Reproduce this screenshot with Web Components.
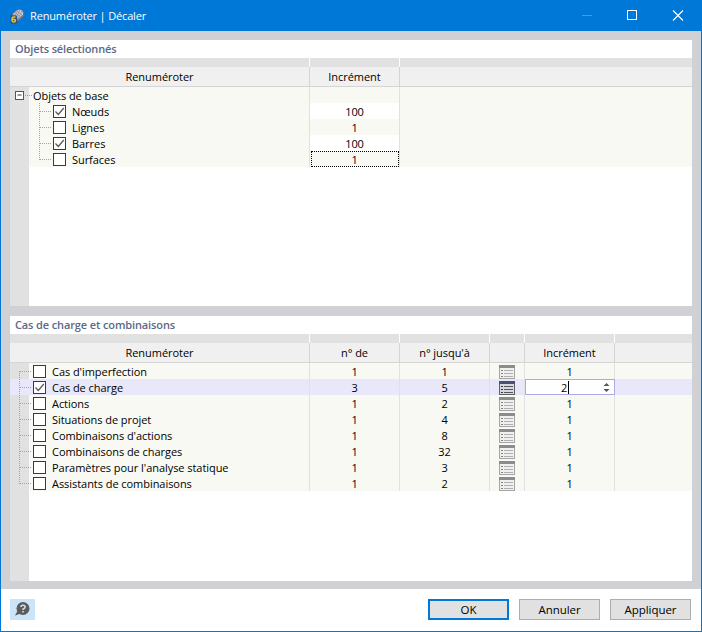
<!DOCTYPE html>
<html lang="fr"><head><meta charset="utf-8"><title>Renuméroter | Décaler</title>
<style>
html,body{margin:0;padding:0;background:#fff}
body{font:11px "Open Sans","Noto Sans",sans-serif;color:#000;letter-spacing:-.05px}
</style></head><body>
<rn-window>
  <rn-titlebar slot="title" text="Renuméroter | Décaler"></rn-titlebar>
  <rn-panel heading="Objets sélectionnés" cols="299px 89px 1fr">
    <rn-header cols="299px 89px 1fr"><span>Renuméroter</span><span>Incrément</span><span></span></rn-header>
    <rn-row cols="299px 89px 1fr"><rn-tree kind="root">Objets de base</rn-tree><rn-cell></rn-cell><rn-cell></rn-cell></rn-row>
    <rn-row cols="299px 89px 1fr"><rn-tree kind="child" checked>Nœuds</rn-tree><rn-cell white>100</rn-cell><rn-cell></rn-cell></rn-row>
    <rn-row cols="299px 89px 1fr"><rn-tree kind="child">Lignes</rn-tree><rn-cell>1</rn-cell><rn-cell></rn-cell></rn-row>
    <rn-row cols="299px 89px 1fr"><rn-tree kind="child" checked>Barres</rn-tree><rn-cell white>100</rn-cell><rn-cell></rn-cell></rn-row>
    <rn-row cols="299px 89px 1fr"><rn-tree kind="child" last>Surfaces</rn-tree><rn-cell focus>1</rn-cell><rn-cell></rn-cell></rn-row>
  </rn-panel>
  <rn-panel heading="Cas de charge et combinaisons" cols="299px 89px 89px 34px 89px 1fr">
    <rn-header cols="299px 89px 89px 34px 89px 1fr"><span>Renuméroter</span><span>n° de</span><span>n° jusqu'à</span><span></span><span>Incrément</span><span></span></rn-header>
    <rn-row cols="299px 89px 89px 34px 89px 1fr"><rn-tree kind="flat" first>Cas d'imperfection</rn-tree><rn-cell>1</rn-cell><rn-cell>1</rn-cell><rn-cell><rn-listicon></rn-listicon></rn-cell><rn-cell>1</rn-cell><rn-cell></rn-cell></rn-row>
    <rn-row selected cols="299px 89px 89px 34px 89px 1fr"><rn-tree kind="flat" checked>Cas de charge</rn-tree><rn-cell>3</rn-cell><rn-cell>5</rn-cell><rn-cell><rn-listicon active></rn-listicon></rn-cell><rn-spin>2</rn-spin><rn-cell></rn-cell></rn-row>
    <rn-row cols="299px 89px 89px 34px 89px 1fr"><rn-tree kind="flat">Actions</rn-tree><rn-cell>1</rn-cell><rn-cell>2</rn-cell><rn-cell><rn-listicon></rn-listicon></rn-cell><rn-cell>1</rn-cell><rn-cell></rn-cell></rn-row>
    <rn-row cols="299px 89px 89px 34px 89px 1fr"><rn-tree kind="flat">Situations de projet</rn-tree><rn-cell>1</rn-cell><rn-cell>4</rn-cell><rn-cell><rn-listicon></rn-listicon></rn-cell><rn-cell>1</rn-cell><rn-cell></rn-cell></rn-row>
    <rn-row cols="299px 89px 89px 34px 89px 1fr"><rn-tree kind="flat">Combinaisons d'actions</rn-tree><rn-cell>1</rn-cell><rn-cell>8</rn-cell><rn-cell><rn-listicon></rn-listicon></rn-cell><rn-cell>1</rn-cell><rn-cell></rn-cell></rn-row>
    <rn-row cols="299px 89px 89px 34px 89px 1fr"><rn-tree kind="flat">Combinaisons de charges</rn-tree><rn-cell>1</rn-cell><rn-cell>32</rn-cell><rn-cell><rn-listicon></rn-listicon></rn-cell><rn-cell>1</rn-cell><rn-cell></rn-cell></rn-row>
    <rn-row cols="299px 89px 89px 34px 89px 1fr"><rn-tree kind="flat">Paramètres pour l'analyse statique</rn-tree><rn-cell>1</rn-cell><rn-cell>3</rn-cell><rn-cell><rn-listicon></rn-listicon></rn-cell><rn-cell>1</rn-cell><rn-cell></rn-cell></rn-row>
    <rn-row cols="299px 89px 89px 34px 89px 1fr"><rn-tree kind="flat" last>Assistants de combinaisons</rn-tree><rn-cell>1</rn-cell><rn-cell>2</rn-cell><rn-cell><rn-listicon></rn-listicon></rn-cell><rn-cell>1</rn-cell><rn-cell></rn-cell></rn-row>
  </rn-panel>
  <rn-footer slot="footer"></rn-footer>
</rn-window>
<script>
function def(name, css, html, init){
  customElements.define(name, class extends HTMLElement{
    constructor(){super();const r=this.attachShadow({mode:'open'});
      r.innerHTML='<style>'+css+'</style>'+(typeof html==='function'?html(this):html);}
    connectedCallback(){ if(init) init(this); }
  });
}
def('rn-window',`
:host{display:flex;flex-direction:column;box-sizing:border-box;width:702px;height:632px;border:1px solid #0078d7;background:#fff}
main{flex:1;min-height:0;display:grid;grid-template-rows:266px 265px;gap:10px;padding:9px 9px 8px;background:#d1d0d5}
`,`<slot name="title"></slot><main><slot></slot></main><slot name="footer"></slot>`);

def('rn-titlebar',`
:host{display:flex;align-items:center;height:30px;background:#0078d7;color:#fff;font-size:11px;letter-spacing:-.15px;padding-left:8px}
.logo{width:16px;height:16px;margin-right:5px;flex:none}
.t{flex:1;margin-top:-1px}
.b{flex:none;display:block}
`,el=>`<svg class="logo" viewBox="0 0 16 16">
<path d="M3 6 8 1.500Q11 .500 13.500 2 16 4.500 15 8L10 13 6 13z" fill="#6d7088"/>
<path d="M4 6 8.500 2Q11 1.200 13 2.800 14.500 4.500 14 6.500L9.500 11Q6 11 4 6z" fill="#c9ccd8"/>
<path d="M6 4.500l6 5M8 3l5.500 4.500M5 6.500l5 4M9 2.200 5.500 8.500M11 2 7 10M13 3 9 10.800" stroke="#7a7d92" stroke-width=".6" fill="none"/>
<rect x="1.500" y="7.500" width="6.500" height="8" rx="1" fill="#1c4f86"/>
<path d="M6.500 9H4.300Q3 9 3 11.500 3 14 4.800 14 6.500 14 6.500 12.500 6.500 11.200 4.800 11.200 3.500 11.200 3 12" stroke="#f0c020" stroke-width="1.500" fill="none"/>
</svg><span class="t">${el.getAttribute('text')}</span>
<svg class="b" width="117" height="30" viewBox="0 0 117 30" style="margin-right:2px"><g fill="none">
<path d="M0 14.500h10" stroke="#3f9be3"/>
<rect x="45.500" y="9.500" width="9" height="9" stroke="#fff"/>
<path d="M91 9.500l10 10M101 9.500l-10 10" stroke="#fff" stroke-width="1.100"/></g></svg>`);

def('rn-panel',`
:host{display:flex;flex-direction:column;min-height:0;background:#fff;overflow:hidden}
h2{margin:0;height:18px;line-height:17px;font-size:11px;font-weight:600;letter-spacing:-.12px;color:#5a6988;padding-left:5px;background:#fff}
.band{display:grid;height:9px;background:#e1e1e1;box-sizing:border-box}
.band i{border-right:1px solid #fff}
.band i:last-child{border:0}
.body{flex:1;min-height:0;background:linear-gradient(to right,#e1e1e1 19px,#fff 19px)}
`,el=>{
  const c=el.getAttribute('cols');const n=c.split(' ').length;
  const cols=c.split(' ').map(v=>v==='1fr'?'1fr':(parseInt(v)+1)+'px').join(' ');
  return `<h2>${el.getAttribute('heading')}</h2><div class="band" style="grid-template-columns:${cols}">${'<i></i>'.repeat(n)}</div><div class="body"><slot></slot></div>`;
});

def('rn-header',`
:host{display:block}
.g{display:grid;height:19px;background:#f0f0f0;border-bottom:1px solid #d4d4d4}
::slotted(span){display:flex;align-items:center;justify-content:center;border-right:1px solid #d4d4d4;color:#000;padding-bottom:1px;box-sizing:border-box}
::slotted(span:last-child){border-right:0}
`,el=>{
  const cols=el.getAttribute('cols').split(' ').map(v=>v==='1fr'?'1fr':(parseInt(v)+1)+'px').join(' ');
  return `<div class="g" style="grid-template-columns:${cols}"><slot></slot></div>`;
});

def('rn-row',`
:host{display:block;--row:#f8f9f3;--gut:#e1e1e1}
:host([selected]){--row:#e8e8fa;--gut:#e8e8fa}
.g{display:grid;height:16px;background:linear-gradient(to right,var(--gut) 19px,var(--row) 19px)}
`,el=>{
  const cols=el.getAttribute('cols').split(' ').map(v=>v==='1fr'?'1fr':(parseInt(v)+1)+'px').join(' ');
  return `<div class="g" style="grid-template-columns:${cols}"><slot></slot></div>`;
});

def('rn-cell',`
:host{display:flex;align-items:center;justify-content:center;box-sizing:border-box;height:16px;border-right:1px solid #e1e1e1;position:relative;color:#000}
:host(:last-child){border-right:0}
:host([white]){background:#fff}
:host([focus])::after{content:"";position:absolute;left:1px;right:0;top:0;bottom:0;border:1px dotted #000}
`,`<slot></slot>`);

const dot='stroke="#a3a3a3" stroke-dasharray="1 1" fill="none"';
def('rn-tree',`
:host{display:flex;align-items:center;height:16px;box-sizing:border-box;border-right:1px solid #e1e1e1;color:#000;white-space:nowrap}
svg{flex:none;display:block}
.box{flex:none;box-sizing:border-box;width:13px;height:13px;border:1px solid #3a3a3a;background:#fff;margin-right:6px;margin-top:1px}
.box svg{width:11px;height:11px}
`,el=>{
  const k=el.getAttribute('kind');const last=el.hasAttribute('last');const first=el.hasAttribute('first');
  const box=`<span class="box">${el.hasAttribute('checked')?'<svg viewBox="0 0 11 11"><path d="M1.500 5.500 4.300 8.500 9.800 2" stroke="#555" stroke-width="1.200" fill="none"/></svg>':''}</span>`;
  if(k==='root') return `<svg width="23" height="16"><rect x="5.500" y="5.500" width="8" height="8" fill="#fff" stroke="#555" transform="translate(0,-1)"/><path d="M7.500 8.500h4" stroke="#333" transform="translate(0,-.5)"/><path d="M15 8.500h8" ${dot}/></svg><slot></slot>`;
  if(k==='child') return `<svg width="43" height="16"><path d="M29.500 ${0}V${last?9:16}" ${dot}/><path d="M30 8.500h12" ${dot}/></svg>${box}<slot></slot>`;
  return `<svg width="23" height="16"><path d="M9.500 ${first?8:0}V${last?9:16}" ${dot}/><path d="M10 8.500h12" ${dot}/></svg>${box}<slot></slot>`;
});

def('rn-listicon',`:host{display:block;height:14px;width:16px;margin-top:1px}svg{display:block}`,el=>{
  const a=el.hasAttribute('active');
  const t=a?'#4a5273':'#8c8c8c',b=a?'#5f5f66':'#a4a4a4',f=a?'#d8d8e2':'#f0f0ee',l=a?'#55555c':'#b0b0b0';
  return `<svg width="16" height="14" viewBox="0 0 16 14" shape-rendering="crispEdges"><rect x=".5" y=".5" width="15" height="13" fill="${f}" stroke="${b}"/><rect x="0" y="0" width="16" height="3" fill="${t}"/>
<path d="M2 5.500h2M2 8.500h2M2 11.500h2" stroke="${a?'#333':'#808080'}"/><path d="M5 5.500h9M5 8.500h9M5 11.500h9" stroke="${l}"/></svg>`;
});

def('rn-spin',`
:host{display:flex;align-items:center;box-sizing:border-box;height:16px;background:#fff;border:1px solid #a9a9e6;color:#000}
.v{flex:1;text-align:center;padding-left:1px;display:flex;justify-content:center}
.caret{display:inline-block;width:1px;height:13px;background:#000;margin-left:1px;align-self:center}
svg{flex:none;margin-right:4px;display:block}
`,`<span class="v"><slot></slot><i class="caret"></i></span><svg width="7" height="9" viewBox="0 0 7 9"><path d="M3.500 0 6.500 3H.5zM3.500 9 .5 6h6z" fill="#555"/></svg>`);

def('rn-btn',`
:host{display:flex;align-items:center;justify-content:center;box-sizing:border-box;width:81px;height:21px;background:#e1e1e1;border:1px solid #adadad;color:#000;padding-bottom:1px}
:host([primary]){border:2px solid #0078d7}
`,`<slot></slot>`);

def('rn-footer',`
:host{display:flex;align-items:flex-start;height:42px;box-sizing:border-box;padding:10px 10px 0 9px;background:#fff;font-size:11.500px}
.help{width:25px;height:21px;background:#cce4f7;display:block;margin-right:auto;margin-top:0}
.btns{display:flex;gap:10px}
`,`<svg class="help" viewBox="0 0 25 21"><circle cx="13" cy="9.500" r="6.500" fill="#5c5c5c"/><path d="M8 11 5 16.500 11 14.500z" fill="#5c5c5c"/>
<path d="M10.800 8Q11 6.200 13 6.200 15.200 6.200 15.200 8 15.200 9.200 13 10.200V11" stroke="#cce4f7" stroke-width="1.500" fill="none"/><rect x="12.200" y="12" width="1.600" height="1.500" fill="#cce4f7"/></svg>
<div class="btns"><rn-btn primary>OK</rn-btn><rn-btn>Annuler</rn-btn><rn-btn>Appliquer</rn-btn></div>`);
</script>
</body></html>
